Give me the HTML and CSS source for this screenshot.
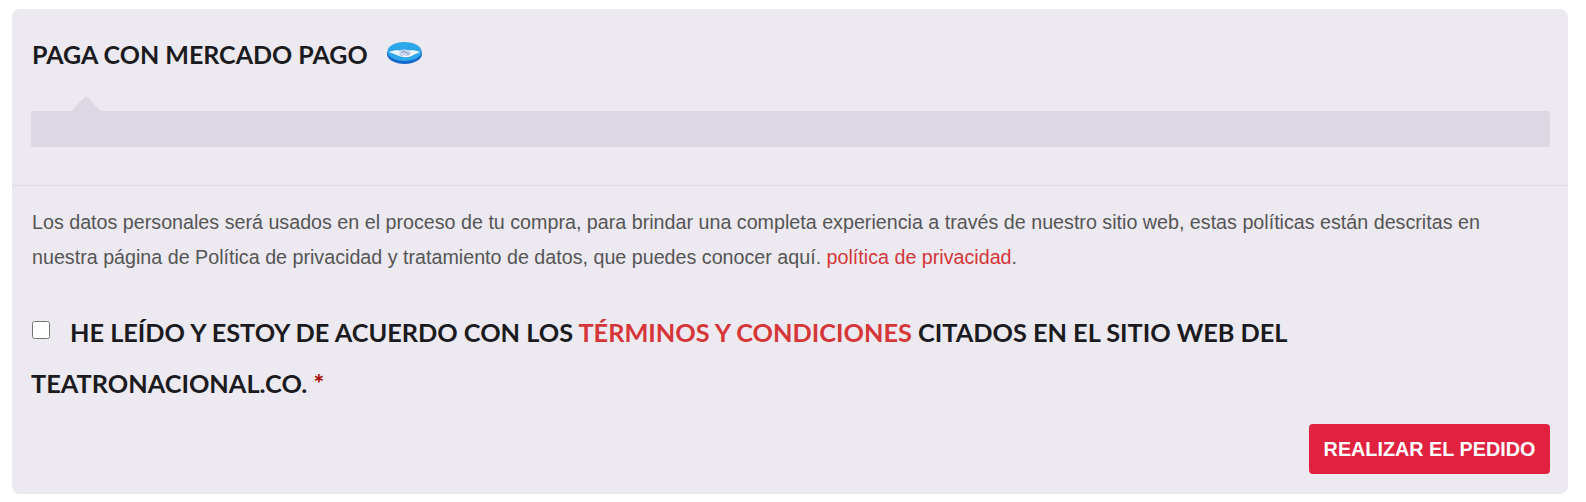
FILE: index.html
```html
<!DOCTYPE html>
<html lang="es">
<head>
<meta charset="utf-8">
<title>Pago</title>
<link rel="stylesheet" href="styles.css">
</head>
<body>
<section class="panel">
  <div class="method">
    <h3 class="method-title">PAGA CON MERCADO PAGO
      <svg class="mp-logo" viewBox="0 0 35 22" width="35" height="22" aria-hidden="true">
        <ellipse cx="17.500" cy="12" rx="17.500" ry="10" fill="#1668cc"/>
        <ellipse cx="17.500" cy="9.500" rx="17" ry="9.500" fill="#2ea6ea"/>
        <path d="M2 10C6 8.500 9 8 13 8.500L17.500 7.500l5 1C26 8 29 8.500 33 10 30 11.500 27 12.500 24.500 14 21.500 15.500 17 15.500 13.500 14.500 9.500 13 6 11.500 2 10Z" fill="#eef5fc"/>
        <path d="M11.500 10l5-2 4 .5 4 2.500-3 3-4.500-.5Z" fill="#c3cfe8"/>
        <path d="M14 10.500l3-1.500 5 3M12.500 12l3 2" fill="none" stroke="#8aa3d0" stroke-width="1"/>
      </svg>
    </h3>
    <div class="pay-box"></div>
  </div>
  <div class="terms">
    <p class="privacy"><span>Los datos personales será usados en el proceso de tu compra, para brindar una completa experiencia a través de nuestro sitio web, estas políticas están descritas en </span><span>nuestra página de Política de privacidad y tratamiento de datos, que puedes conocer aquí. </span><a href="#" class="link">política de privacidad</a><span>.</span></p>
    <label class="accept"><input type="checkbox" class="check"><span>HE LEÍDO Y ESTOY DE ACUERDO CON LOS </span><a href="#" class="terms-link">TÉRMINOS Y CONDICIONES</a><span> CITADOS EN EL SITIO WEB DEL </span><span>TEATRONACIONAL.CO. </span><abbr class="req">*</abbr></label>
    <div class="actions"><button class="place-order" type="button">REALIZAR EL PEDIDO</button></div>
  </div>
</section>
</body>
</html>
```
FILE: styles.css
```css
* { box-sizing: border-box; }
html, body { margin: 0; background: #fff; }
body { padding: 9px 18px 9px 12px; font-family: "Liberation Sans", Arial, sans-serif; }
.panel { height: 485px; background: #ece9f0; border-radius: 8px; }
.method { height: 177px; padding: 28px 18px 0 19px; border-bottom: 1px solid #dedbe3; }
.method-title { margin: 0 0 0 1px; height: 34px; display: flex; align-items: center; gap: 19px; font-family: "Lato", sans-serif; font-weight: 700; font-size: 25px; line-height: 34px; color: #1b1b1f; }
.mp-logo { flex: none; margin-top: -2px; }
.pay-box { position: relative; margin-top: 40px; height: 36px; background: #dcd7e2; border-radius: 2px; }
.pay-box::before { content: ""; position: absolute; left: 40px; top: -15px; width: 0; height: 0; border: 15px solid transparent; border-top: 0; border-bottom-color: #dcd7e2; }
.terms { padding: 19px 18px 0 19px; }
.privacy { margin: 0 0 0 1px; font-size: 19.700px; line-height: 34.500px; color: #555; }
.link { color: #d63638; text-decoration: none; }
.accept { display: block; margin-top: 33px; font-family: "Lato", sans-serif; font-weight: 700; font-size: 25.300px; line-height: 51px; color: #1b1b1f; }
.check { width: 18px; height: 18px; margin: 0 20px 0 1px; vertical-align: 3px; }
.terms-link { color: #d63638; text-decoration: none; }
.req { color: #a00; text-decoration: none; }
.actions { display: flex; justify-content: flex-end; margin-top: 15px; }
.place-order { width: 241px; height: 50px; background: #e0213f; border: 0; border-radius: 4px; color: #fff; font-family: "Liberation Sans", Arial, sans-serif; font-weight: 700; font-size: 19.800px; }
```
